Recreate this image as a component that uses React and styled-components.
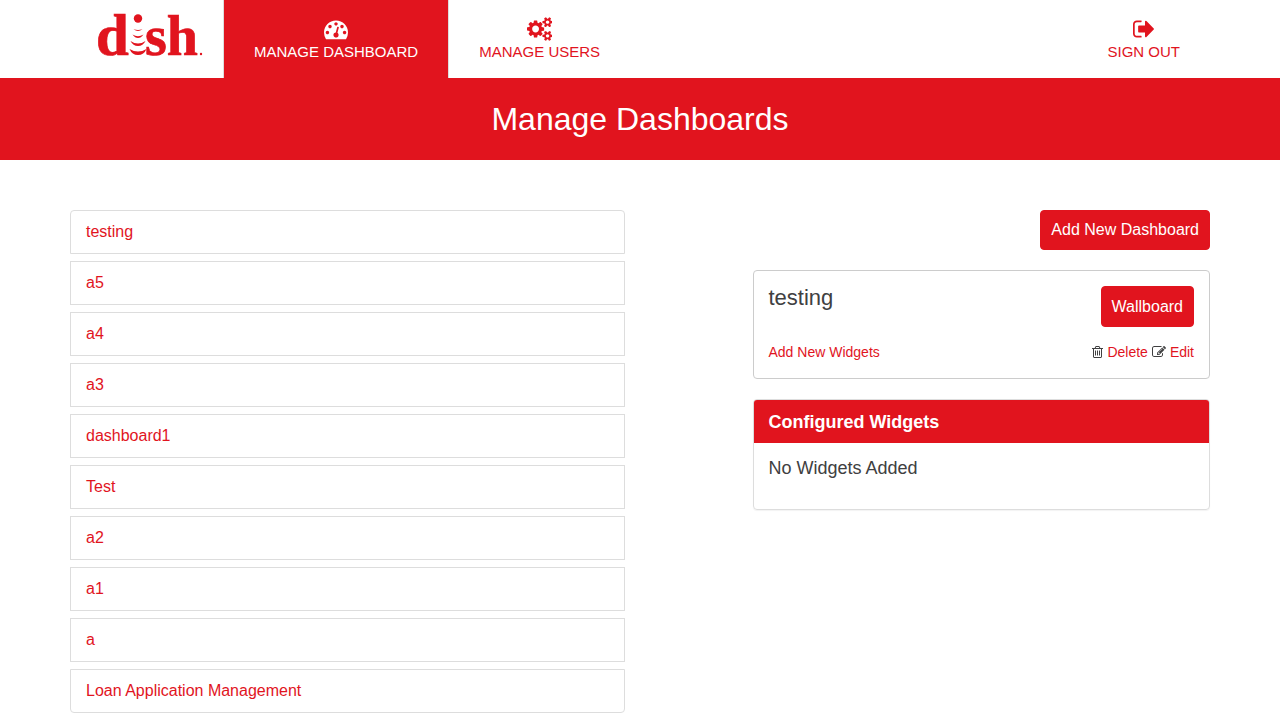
import React from "react";
import styled, { createGlobalStyle } from "styled-components";

const red = "#e1141e";

const GlobalStyle = createGlobalStyle`
  *, *::before, *::after { box-sizing: border-box; }
  body {
    margin: 0;
    background: #fff;
    color: #404041;
    font-family: "Liberation Sans", Arial, sans-serif;
    font-size: 16px;
    line-height: 22px;
  }
  a { color: ${red}; text-decoration: none; }
  button { font-family: inherit; cursor: pointer; }
`;

const Container = styled.div`
  width: 100%;
  max-width: 1170px;
  margin: 0 auto;
  padding: 0 15px;
`;

const Header = styled.header`
  background: #fff;
`;

const NavBar = styled(Container)`
  display: flex;
  height: 78px;
`;

const Brand = styled.a`
  padding: 0 17px 0 26px;
  border-right: 1px solid #ddd;
`;

const LogoSvg = styled.svg`
  display: block;
`;

const Nav = styled.nav`
  display: flex;
  flex: 1;
`;

const NavLink = styled.a`
  display: flex;
  flex-direction: column;
  align-items: center;
  padding: 17px 30px 0;
  margin-left: ${(p) => (p.$end ? "auto" : "0")};
  border: 0 solid ${(p) => (p.$active ? "#ddd" : "transparent")};
  border-right-width: ${(p) => (p.$end ? "0" : "1px")};
  background: ${(p) => (p.$active ? red : "transparent")};
  background-clip: padding-box;
  color: ${(p) => (p.$active ? "#fff" : red)};
  font-size: 15px;
  line-height: 22px;
  text-transform: uppercase;
  white-space: nowrap;
`;

const Glyph = styled.svg`
  display: block;
  flex: none;
  height: ${(p) => p.$size}px;
  fill: currentColor;
`;

const Banner = styled.div`
  background: ${red};
  color: #fff;
  text-align: center;
  padding: 21px 15px;
`;

const Title = styled.h1`
  margin: 0;
  font-size: 32px;
  line-height: 40px;
  font-weight: 400;
`;

const Columns = styled(Container)`
  display: grid;
  grid-template-columns: repeat(12, minmax(0, 1fr));
  column-gap: 30px;
  padding-top: 50px;
  padding-bottom: 7px;
`;

const DashboardList = styled.ul`
  grid-column: 1 / span 6;
  list-style: none;
  margin: 0;
  padding: 0;
  display: flex;
  flex-direction: column;
  gap: 7px;
`;

const DashboardItem = styled.li`
  border: 1px solid #ddd;
  &:first-child { border-radius: 4px 4px 0 0; }
  &:last-child { border-radius: 0 0 4px 4px; }
`;

const DashboardLink = styled.a`
  display: block;
  padding: 10px 15px;
`;

const Side = styled.div`
  grid-column: 8 / span 5;
  display: flex;
  flex-direction: column;
  gap: 20px;
`;

const Button = styled.button`
  align-self: flex-end;
  height: ${(p) => (p.$tall ? 41 : 40)}px;
  padding: 0 10px;
  border: 1px solid ${red};
  border-radius: 4px;
  background: ${red};
  color: #fff;
  font-size: 16px;
  line-height: 22px;
`;

const Card = styled.section`
  border: 1px solid #ccc;
  border-radius: 4px;
  padding: 15px;
`;

const CardRow = styled.div`
  display: flex;
  justify-content: space-between;
  align-items: flex-start;
`;

const CardTitle = styled.h2`
  margin: 0;
  font-size: 22px;
  line-height: 24px;
  font-weight: 400;
`;

const LinkRow = styled(CardRow)`
  padding-top: 14px;
  font-size: 14px;
`;

const Actions = styled.div`
  display: flex;
  align-items: center;
  gap: 4px;
`;

const Panel = styled.section`
  border: 1px solid #ddd;
  border-radius: 4px;
  overflow: hidden;
  box-shadow: 0 1px 1px rgba(0, 0, 0, 0.05);
`;

const PanelTitle = styled.h2`
  margin: 0;
  padding: 11px 15px 10px;
  background: ${red};
  color: #fff;
  font-size: 18px;
  line-height: 22px;
  font-weight: 700;
`;

const PanelText = styled.p`
  margin: 0;
  padding: 14px 15px 30px;
  font-size: 18px;
  line-height: 22px;
`;

const smallCog =
  "v140q0 16-149 31-12 27-30 52 51 113 51 138 0 4-4 7-122 71-124 71-8 0-46-47t-52-68q-20 2-30 2t-30-2q-14 21-52 68t-46 47q-2 0-124-71-4-3-4-7 0-25 51-138-18-25-30-52-149-15-149-31v-140q0-16 149-31 13-29 30-52-51-113-51-138 0-4 4-7 4-2 35-20t59-34 30-16q8 0 46 46.5t52 67.5q20-2 30-2t30 2q51-71 92-112l6-2q4 0 124 70 4 3 4 7 0 25-51 138 17 23 30 52 149 15 149 31z";

const trashBar =
  "v576q0 14-9 23t-23 9h-64q-14 0-23-9t-9-23v-576q0-14 9-23t23-9h64q14 0 23 9t9 23z";

const icons = {
  gauge: {
    box: "0 0 1792 1792",
    d: "M384 1152q0-53-37.5-90.5t-90.5-37.5-90.5 37.5-37.5 90.5 37.5 90.5 90.5 37.5 90.5-37.5 37.5-90.5zm192-448q0-53-37.5-90.5t-90.5-37.5-90.5 37.5-37.5 90.5 37.5 90.5 90.5 37.5 90.5-37.5 37.5-90.5zm428 481l101-382q6-26-7.5-48.5t-38.5-29.5-48 6.5-30 39.5l-101 382q-60 5-107 43.5t-63 98.5q-20 77 20 146t117 89 146-20 89-117q16-60-6-117t-72-91zm660-33q0-53-37.5-90.5t-90.5-37.5-90.5 37.5-37.5 90.5 37.5 90.5 90.5 37.5 90.5-37.5 37.5-90.5zm-640-640q0-53-37.5-90.5t-90.5-37.5-90.5 37.5-37.5 90.5 37.5 90.5 90.5 37.5 90.5-37.5 37.5-90.5zm448 192q0-53-37.5-90.5t-90.5-37.5-90.5 37.5-37.5 90.5 37.5 90.5 90.5 37.5 90.5-37.5 37.5-90.5zm320 448q0 261-141 483-19 29-54 29h-1402q-35 0-54-29-141-221-141-483 0-182 71-348t191-286 286-191 348-71 348 71 286 191 191 286 71 348z",
  },
  cogs: {
    box: "0 0 1920 1792",
    d: `M896 896q0-106-75-181t-181-75-181 75-75 181 75 181 181 75 181-75 75-181zm768 512q0-52-38-90t-90-38-90 38-38 90q0 53 37.5 90.5t90.5 37.5 90.5-37.5 37.5-90.5zm0-1024q0-52-38-90t-90-38-90 38-38 90q0 53 37.5 90.5t90.5 37.5 90.5-37.5 37.5-90.5zm-384 421v185q0 10-7 19.5t-16 10.5l-155 24q-11 35-32 76 34 48 90 115 7 11 7 20 0 12-7 19-23 30-82.5 89.5t-78.5 59.5q-11 0-21-7l-115-90q-37 19-77 31-11 108-23 155-7 24-30 24h-186q-11 0-20-7.5t-10-17.5l-23-153q-34-10-75-31l-118 89q-7 7-20 7-11 0-21-8-144-133-144-160 0-9 7-19 10-14 41-53t47-61q-23-44-35-82l-152-24q-10-1-17-9.5t-7-19.5v-185q0-10 7-19.5t16-10.5l155-24q11-35 32-76-34-48-90-115-7-11-7-20 0-12 7-20 22-30 82-89t79-59q11 0 21 7l115 90q34-18 77-32 11-108 23-154 7-24 30-24h186q11 0 20 7.5t10 17.5l23 153q34 10 75 31l118-89q8-7 20-7 11 0 21 8 144 133 144 160 0 8-7 19-12 16-42 54t-45 60q23 48 34 82l152 23q10 2 17 10.5t7 19.5zM1920 1338${smallCog}M1920 314${smallCog}`,
  },
  signOut: {
    box: "64 0 1600 1792",
    d: "M704 1440q0 4 1 20t.5 26.5-3 23.5-10 19.5-20.5 6.5h-320q-119 0-203.5-84.5t-84.5-203.5v-704q0-119 84.5-203.5t203.5-84.5h320q13 0 22.5 9.5t9.5 22.5q0 4 1 20t.5 26.5-3 23.5-10 19.5-20.5 6.5h-320q-66 0-113 47t-47 113v704q0 66 47 113t113 47h312l11.5 1 11.5 3 8 5.5 7 9 2 13.5zm928-544q0 26-19 45l-544 544q-19 19-45 19t-45-19-19-45v-288h-448q-26 0-45-19t-19-45v-384q0-26 19-45t45-19h448v-288q0-26 19-45t45-19 45 19l544 544q19 19 19 45z",
  },
  trash: {
    box: "192 0 1408 1792",
    d: `M704 736${trashBar}M960 736${trashBar}M1216 736${trashBar}M1344 1460v-948h-896v948q0 22 7 40.5t14.5 27 10.5 8.5h832q3 0 10.5-8.5t14.5-27 7-40.5zm-672-1076h448l-48-117q-7-9-17-11h-317q-10 2-17 11zm928 32v64q0 14-9 23t-23 9h-96v948q0 83-47 143.5t-113 60.5h-832q-66 0-113-58.5t-47-141.5v-952h-96q-14 0-23-9t-9-23v-64q0-14 9-23t23-9h309l70-167q15-37 54-63t79-26h320q40 0 79 26t54 63l70 167h309q14 0 23 9t9 23z`,
  },
  edit: {
    box: "0 0 1792 1792",
    d: "M888 1184l116-116-152-152-116 116v56h96v96h56zm440-720q-16-16-33 1l-350 350q-17 17-1 33t33-1l350-350q17-17 1-33zm80 594v190q0 119-84.5 203.5t-203.5 84.5h-832q-119 0-203.5-84.5t-84.5-203.5v-832q0-119 84.5-203.5t203.5-84.5h832q63 0 117 25 15 7 18 23 3 17-9 29l-49 49q-14 14-32 8-23-6-45-6h-832q-66 0-113 47t-47 113v832q0 66 47 113t113 47h832q66 0 113-47t47-113v-126q0-13 9-22l64-64q15-15 35-7t20 29zm-96-738l288 288-672 672h-288v-288zm444 132l-92 92-288-288 92-92q28-28 68-28t68 28l152 152q28 28 28 68t-28 68z",
  },
};

function Icon({ name, size }) {
  return (
    <Glyph viewBox={icons[name].box} $size={size} aria-hidden="true">
      <path d={icons[name].d} />
    </Glyph>
  );
}

function Logo() {
  return (
    <LogoSvg width="110" height="74" viewBox="0 0 110 74" role="img" aria-label="dish">
      <g
        fill={red}
        stroke={red}
        strokeWidth="0.7"
        fontFamily="Liberation Serif, serif"
        fontWeight="700"
      >
        <text x="0" y="55" fontSize="59">d</text>
        <text x="49" y="55" fontSize="56">sh</text>
      </g>
      <g fill={red}>
        <circle cx="42" cy="18.500" r="4.200" />
        <path d="M37.500 29Q42 31 46.500 29Q42 33 37.500 29Z" />
        <path d="M36.500 34.500Q42 38 47.500 34.500Q45 38 42 38T36.500 34.500Z" />
        <path d="M34.500 41Q42 46 49.500 41Q47 46 42 46T34.500 41Z" />
        <path d="M33.500 49Q42 54 50.500 49Q48 55 42 55T33.500 49Z" />
        <circle cx="105" cy="54" r="1.200" />
      </g>
    </LogoSvg>
  );
}

const dashboards = [
  "testing", "a5", "a4", "a3", "dashboard1", "Test", "a2", "a1", "a",
  "Loan Application Management",
];

export default function App() {
  return (
    <>
      <GlobalStyle />
      <Header>
        <NavBar>
          <Brand href="#home"><Logo /></Brand>
          <Nav>
            <NavLink href="#dashboards" $active>
              <Icon name="gauge" size={24} />
              Manage Dashboard
            </NavLink>
            <NavLink href="#users">
              <Icon name="cogs" size={24} />
              Manage Users
            </NavLink>
            <NavLink href="#signout" $end>
              <Icon name="signOut" size={24} />
              Sign Out
            </NavLink>
          </Nav>
        </NavBar>
      </Header>
      <Banner>
        <Title>Manage Dashboards</Title>
      </Banner>
      <Columns as="main">
        <DashboardList>
          {dashboards.map((name) => (
            <DashboardItem key={name}>
              <DashboardLink href={`#${encodeURIComponent(name)}`}>{name}</DashboardLink>
            </DashboardItem>
          ))}
        </DashboardList>
        <Side>
          <Button type="button">Add New Dashboard</Button>
          <Card>
            <CardRow>
              <CardTitle>testing</CardTitle>
              <Button type="button" $tall>Wallboard</Button>
            </CardRow>
            <LinkRow>
              <a href="#widgets">Add New Widgets</a>
              <Actions>
                <Icon name="trash" size={14} />
                <a href="#delete">Delete</a>
                <Icon name="edit" size={14} />
                <a href="#edit">Edit</a>
              </Actions>
            </LinkRow>
          </Card>
          <Panel>
            <PanelTitle>Configured Widgets</PanelTitle>
            <PanelText>No Widgets Added</PanelText>
          </Panel>
        </Side>
      </Columns>
    </>
  );
}
